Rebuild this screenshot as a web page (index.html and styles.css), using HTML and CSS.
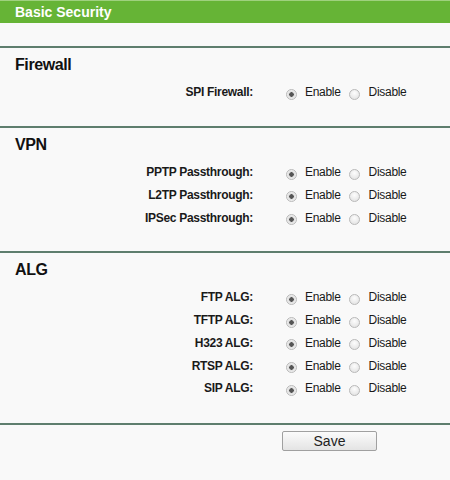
FILE: index.html
```html
<!DOCTYPE html>
<html lang="en">
<head>
  <meta charset="UTF-8">
  <title>Basic Security</title>
  <link rel="stylesheet" href="styles.css">
</head>
<body>
  <div class="title">Basic Security</div>
  <div class="spacer"></div>

  <div class="section">
    <h2>Firewall</h2>
    <div class="row">
      <span class="name">SPI Firewall:</span>
      <label class="opt"><input type="radio" name="spi" checked><span>Enable</span></label>
      <label class="opt"><input type="radio" name="spi"><span>Disable</span></label>
    </div>
  </div>

  <div class="section">
    <h2>VPN</h2>
    <div class="row">
      <span class="name">PPTP Passthrough:</span>
      <label class="opt"><input type="radio" name="pptp" checked><span>Enable</span></label>
      <label class="opt"><input type="radio" name="pptp"><span>Disable</span></label>
    </div>
    <div class="row">
      <span class="name">L2TP Passthrough:</span>
      <label class="opt"><input type="radio" name="l2tp" checked><span>Enable</span></label>
      <label class="opt"><input type="radio" name="l2tp"><span>Disable</span></label>
    </div>
    <div class="row">
      <span class="name">IPSec Passthrough:</span>
      <label class="opt"><input type="radio" name="ipsec" checked><span>Enable</span></label>
      <label class="opt"><input type="radio" name="ipsec"><span>Disable</span></label>
    </div>
  </div>

  <div class="section last">
    <h2>ALG</h2>
    <div class="row">
      <span class="name">FTP ALG:</span>
      <label class="opt"><input type="radio" name="ftp" checked><span>Enable</span></label>
      <label class="opt"><input type="radio" name="ftp"><span>Disable</span></label>
    </div>
    <div class="row">
      <span class="name">TFTP ALG:</span>
      <label class="opt"><input type="radio" name="tftp" checked><span>Enable</span></label>
      <label class="opt"><input type="radio" name="tftp"><span>Disable</span></label>
    </div>
    <div class="row">
      <span class="name">H323 ALG:</span>
      <label class="opt"><input type="radio" name="h323" checked><span>Enable</span></label>
      <label class="opt"><input type="radio" name="h323"><span>Disable</span></label>
    </div>
    <div class="row">
      <span class="name">RTSP ALG:</span>
      <label class="opt"><input type="radio" name="rtsp" checked><span>Enable</span></label>
      <label class="opt"><input type="radio" name="rtsp"><span>Disable</span></label>
    </div>
    <div class="row">
      <span class="name">SIP ALG:</span>
      <label class="opt"><input type="radio" name="sip" checked><span>Enable</span></label>
      <label class="opt"><input type="radio" name="sip"><span>Disable</span></label>
    </div>
  </div>

  <div class="footer">
    <button type="button" class="save">Save</button>
  </div>
</body>
</html>
```

FILE: styles.css
```css
* {
  box-sizing: border-box;
}
body {
  margin: 0;
  background: #f9f9f9;
  font-family: "Liberation Sans", Arial, sans-serif;
  color: #1a1a1a;
}
.title {
  height: 23px;
  line-height: 22px;
  padding-left: 15px;
  background: #66b436;
  border-top: 1px solid #9fd17e;
  color: #fff;
  font-size: 14px;
  font-weight: bold;
}
.spacer {
  height: 23px;
}
.section {
  border-top: 2px solid #5e7e6e;
  padding: 7px 0 22px;
}
.section.last {
  padding-bottom: 23px;
}
.section h2 {
  margin: 0 0 6px 15px;
  font-size: 16px;
  line-height: 20px;
  letter-spacing: -0.4px;
  color: #111;
}
.row {
  display: flex;
  align-items: center;
  height: 22.75px;
  font-size: 12px;
  letter-spacing: -0.3px;
}
.name {
  width: 253px;
  text-align: right;
  font-weight: bold;
  margin-right: 33px;
}
.opt {
  display: flex;
  align-items: center;
  margin-right: 8px;
}
.opt input {
  appearance: none;
  -webkit-appearance: none;
  width: 11px;
  height: 11px;
  margin: 4px 8px 0 0;
  border: 1px solid #b9b9b9;
  border-radius: 50%;
  background: radial-gradient(circle at 50% 35%, #fdfdfd, #dedede);
}
.opt input:checked {
  background: radial-gradient(circle, #555 0 2px, #dcdcdc 2.5px, #f4f4f4 5px);
}
.opt + .opt span {
  margin-left: 1px;
}
.footer {
  border-top: 2px solid #5e7e6e;
  padding: 6px 0 0 282px;
}
.save {
  width: 95px;
  height: 20px;
  padding: 0;
  border: 1px solid #a0a0a0;
  border-radius: 2px;
  background: linear-gradient(#fbfbfb, #e4e4e4);
  font-family: "Liberation Sans", Arial, sans-serif;
  font-size: 14px;
  color: #222;
}
```
